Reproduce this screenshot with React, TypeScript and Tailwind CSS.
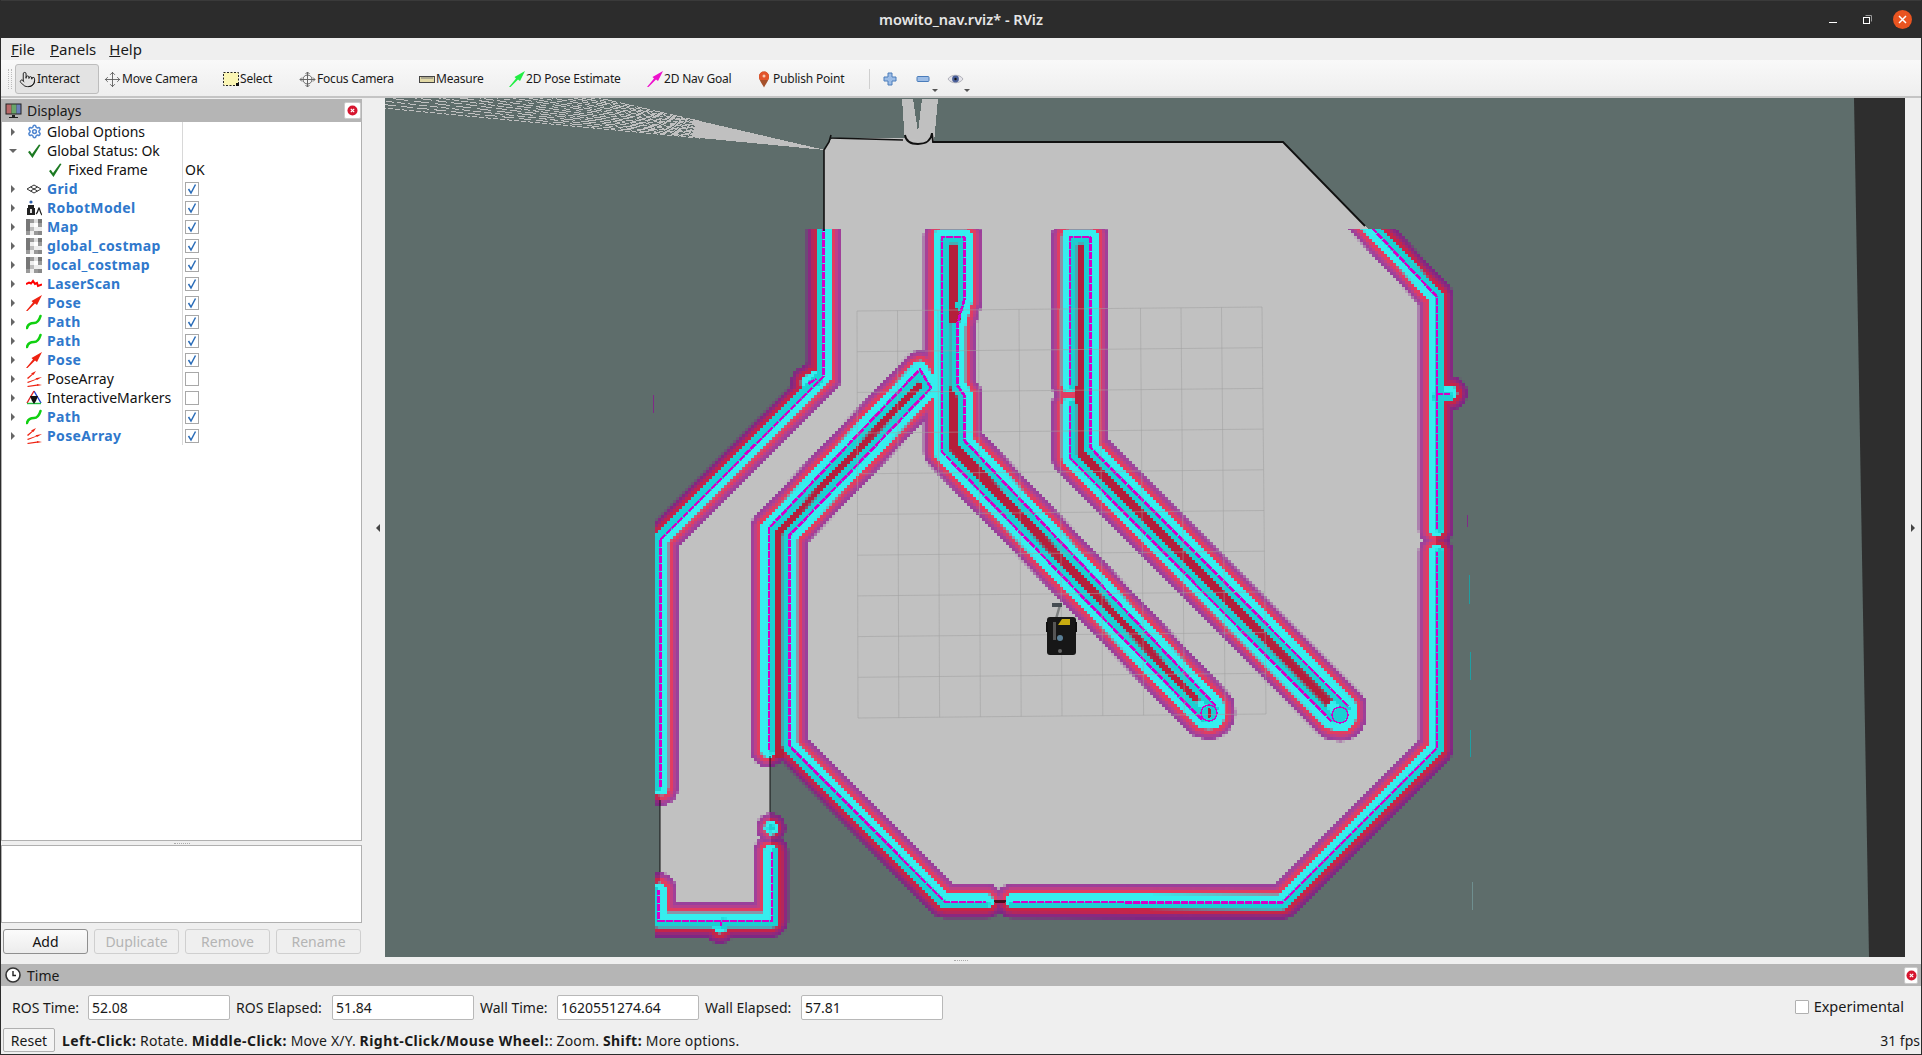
import { Pointer, Settings, Move } from "lucide-react";
import type { ReactNode } from "react";

type Pt = [number, number];

// shift a polyline sideways, used for the darker half of the cyan band
const shift = (pts: Pt[], d: number): Pt[] =>
  pts.map((p, i) => {
    const a = pts[Math.max(i - 1, 0)];
    const b = pts[Math.min(i + 1, pts.length - 1)];
    const n = (q: Pt, r: Pt): Pt => {
      const l = Math.hypot(r[0] - q[0], r[1] - q[1]) || 1;
      return [-(r[1] - q[1]) / l, (r[0] - q[0]) / l];
    };
    const n1 = i === 0 ? n(p, b) : n(a, p);
    const n2 = i === pts.length - 1 ? n(a, p) : n(p, b);
    const k = 1 + n1[0] * n2[0] + n1[1] * n2[1];
    return [p[0] + (d * (n1[0] + n2[0])) / k, p[1] + (d * (n1[1] + n2[1])) / k];
  });

const toD = (pts: Pt[]) => "M" + pts.map((p) => p[0] + " " + p[1]).join("L");
const ring = (x: number, y: number, r: number) =>
  `M${x - r} ${y}a${r} ${r} 0 1 0 ${2 * r} 0a${r} ${r} 0 1 0 ${-2 * r} 0`;

const contours: { pts: Pt[]; side: number }[] = [
  { pts: [[824, 200], [824, 377], [661, 540], [661, 788]], side: 1 },
  { pts: [[808, 383], [816, 378]], side: 1 },
  { pts: [[768, 750], [768, 528], [920, 368], [932, 388], [790, 536], [790, 745], [945, 901], [986, 901]], side: 1 },
  { pts: [[1013, 901], [1282, 902], [1436, 748], [1436, 552]], side: 1 },
  { pts: [[1436, 529], [1436, 297], [1340, 195]], side: 1 },
  { pts: [[1436, 393], [1450, 393]], side: 1 },
  { pts: [[1201, 720], [941, 452], [941, 236], [965, 236], [965, 300], [958, 325], [958, 385], [965, 395], [965, 440], [1217, 706]], side: 1 },
  { pts: [[1331, 722], [1069, 458], [1069, 405]], side: 1 },
  { pts: [[1069, 385], [1069, 236], [1091, 236], [1091, 447], [1349, 706]], side: 1 },
  { pts: [[771, 852], [771, 920], [659, 920], [659, 890]], side: -1 },
  { pts: [[720, 922], [720, 926]], side: -1 },
];

const allCores = contours.map((c) => toD(c.pts)).join("") + ring(1209, 713, 9) + ring(1340, 715, 9);
const darkHalf = contours.map((c) => toD(shift(c.pts, 3.7 * c.side))).join("");
const magenta = contours.map((c) => toD(shift(c.pts, 0.8 * c.side))).join("");

const layers = [
  { w: 35, c: "#8a0f8c" },
  { w: 31, c: "#9c1088" },
  { w: 27, c: "#be1070" },
  { w: 23, c: "#ee0a3c" },
];

// laser rays fanning out of the corner of the room
const rays = Array.from({ length: 18 }, (_, i) => {
  const s = 0.095 + (i * 0.135) / 17;
  return { d: `M700 ${150 - 125 * s}L385 ${150 - 440 * s}`, dash: `${5 + (i * 7) % 11} ${2 + (i * 3) % 5}` };
});

const CostMap = () => (
  <g clipPath="url(#bounds)" fill="none" strokeLinecap="round" strokeLinejoin="round">
    <g filter="url(#cells)">
      <g opacity={0.72}>
        {layers.map((l) => (
          <path key={l.w} d={allCores} stroke={l.c} strokeWidth={l.w} />
        ))}
        {[15, 13, 11, 9].map((r, i) => (
          <circle key={r} cx={771} cy={828} r={r} fill={layers[i].c} stroke="none" />
        ))}
      </g>
      <path
        d="M779 752L779 532L925 378M953 240L953 447L1209 713M1080 240L1080 452L1340 715"
        stroke="#b41f3b"
        strokeWidth={12}
      />
      <path d={allCores} stroke="#36eeee" strokeWidth={15} />
      <path d={darkHalf} stroke="#1ad0d2" strokeWidth={7.5} />
      <circle cx={771} cy={828} r={7} fill="#36eeee" stroke="none" />
      <circle cx={771} cy={828} r={3.5} fill="#1ad0d2" stroke="none" />
      <path d="M956 313L956 319" stroke="#b41f3b" strokeWidth={8} />
      <circle cx={1209} cy={713} r={8} fill="#1ad0d2" stroke="none" />
      <circle cx={1340} cy={715} r={8} fill="#1ad0d2" stroke="none" />
    </g>
    <g shapeRendering="crispEdges">
      <path d="M995 901L1005 901" stroke="#4a1020" strokeWidth={3} />
      <path d={magenta} stroke="#d400c8" strokeWidth={2.6} strokeLinecap="butt" strokeDasharray="7 1" />
      <path d={ring(1209, 713, 8) + ring(1340, 715, 8)} stroke="#d400c8" strokeWidth={1.5} />
      <path d="M1209 709L1209 717" stroke="#b41f3b" strokeWidth={3} />
    </g>
  </g>
);

const Robot = () => (
  <g>
    <path d="M1060 605L1054 626" stroke="#7d8080" strokeWidth={2.5} />
    <rect x={1052} y={603} width={10} height={4} fill="#454c52" />
    <rect x={1047} y={617} width={29} height={38} rx={3} fill="#171717" />
    <rect x={1046} y={622} width={2} height={10} fill="#101010" />
    <rect x={1075} y={622} width={2} height={10} fill="#101010" />
    <path d="M1058 625L1062 619L1070 619L1070 625Z" fill="#c8ac10" />
    <rect x={1053} y={622} width={3} height={18} fill="#555" />
    <circle cx={1060} cy={638} r={3} fill="#5a7f96" />
    <circle cx={1060} cy={651} r={2} fill="#666" />
  </g>
);

const Scene = () => {
  const cols = Array.from({ length: 11 }, (_, i) => i / 10);
  return (
    <svg viewBox="385 98 1520 859" width={1520} height={859} className="block">
      <defs>
        <clipPath id="bounds">
          <rect x={655} y={229} width={1250} height={728} />
        </clipPath>
        {/* the costmap is drawn in 3px cells, so sample it on a 3px lattice */}
        <filter
          id="cells"
          filterUnits="userSpaceOnUse"
          primitiveUnits="userSpaceOnUse"
          x={385}
          y={98}
          width={1520}
          height={859}
          colorInterpolationFilters="sRGB"
        >
          <feFlood x={386} y={99} width={1} height={1} floodColor="#000" />
          <feComposite x={385} y={98} width={3} height={3} />
          <feTile result="lattice" />
          <feComposite in="SourceGraphic" in2="lattice" operator="in" />
          <feMorphology operator="dilate" radius={1} />
        </filter>
      </defs>
      <rect x={385} y={98} width={1520} height={859} fill="#5e6d6b" />
      <polygon points="1854,98 1905,98 1905,957 1869,957" fill="#2e2e2e" />

      {/* laser fan and door gap */}
      <g stroke="#c0c0c0" fill="none" shapeRendering="crispEdges">
        {rays.map((r) => (
          <path key={r.d} d={r.d} strokeDasharray={r.dash} />
        ))}
      </g>
      <g fill="#c0c0c0" shapeRendering="crispEdges">
        <polygon points="825,150 700,121 700,138" />
        <polygon points="902,99 913,99 918,132 922,99 938,99 934,142 905,142" />
      </g>

      {/* free space */}
      <polygon
        points="824,150 832,138 905,138 934,142 1283,142 1365,226 1436,297 1436,748 1282,902 945,901 792,745 770,750 771,920 660,920 660,540 824,377"
        fill="#c1c1c1"
        shapeRendering="crispEdges"
      />

      <CostMap />

      {/* walls */}
      <g stroke="#111" fill="none" strokeWidth={1.6}>
        <path d="M824 150L824 231M824 150L829 142L831 135M831 138L903 140" />
        <path d="M905 135C906 142 912 144 918 144C926 144 931 141 932 133L933 142L1283 142L1365 226" strokeWidth={1.8} />
        <path d="M770 756L770 812M660 800L660 872" strokeWidth={1} />
      </g>
      <g stroke="#7f2a86" shapeRendering="crispEdges">
        <path d="M653 395L653 413M1467 515L1467 527" />
      </g>
      <g stroke="#1f9fa3" shapeRendering="crispEdges">
        <path d="M1469 575L1469 604M1470 652L1470 680M1470 730L1470 757" />
      </g>
      <path d="M1472 882L1472 910" stroke="#6f8f8f" shapeRendering="crispEdges" />

      {/* grid */}
      <g stroke="#a0a0a0" strokeOpacity={0.55} strokeWidth={1} fill="none">
        {cols.map((t) => (
          <path key={"v" + t} d={`M${857 + 405 * t} ${311 - 4 * t}L${858 + 408 * t} ${718 - 4 * t}`} />
        ))}
        {cols.map((t) => (
          <path key={"h" + t} d={`M${857 + t} ${311 + 407 * t}L${1262 + 4 * t} ${307 + 407 * t}`} />
        ))}
      </g>
      <Robot />
    </svg>
  );
};

/* ---------- small icons ---------- */

const Arrow = ({ color }: { color: string }) => (
  <svg width={16} height={16} viewBox="0 0 16 16">
    <path d="M0 16L7 7.5L5.5 6L16 0L11 10L9 8.5L1.5 16Z" fill={color} />
  </svg>
);

const Check = ({ size = 16 }: { size?: number }) => (
  <svg width={size} height={size} viewBox="0 0 16 16">
    <path d="M2 9L3.8 7.8L6 11L13 1.5L14.5 2L6.5 15Z" fill="#1c7a22" />
  </svg>
);

const MapIcon = () => {
  const cells = [
    "#777", "#999", "#ddd", "#777",
    "#777", "#eee", "#fff", "#999",
    "#777", "#bbb", "#eee", "#eee",
    "#999", "#eee", "#999", "#888",
  ];
  return (
    <div className="grid h-4 w-4 grid-cols-4">
      {cells.map((c, i) => (
        <svg key={i} width={4} height={4}>
          <rect width={4} height={4} fill={c} />
        </svg>
      ))}
    </div>
  );
};

const GridIcon = () => (
  <svg width={16} height={16} viewBox="0 0 16 16" fill="none" stroke="#333">
    <path d="M1 8L8 4L15 8L8 12ZM4.5 6L11.5 10M11.5 6L4.5 10" />
  </svg>
);

const RobotIcon = () => (
  <svg width={16} height={16} viewBox="0 0 16 16">
    <circle cx={5} cy={2} r={1.6} fill="#2c5fa8" />
    <path d="M2 5H8V8H9L9 15H1V8H2Z" fill="#222" />
    <path d="M4 9H6V13H4Z" fill="#ddd" />
    <path d="M10 14C12 13 12 9 13 8C14 9 14 13 16 15" stroke="#222" strokeWidth={1.3} fill="none" />
  </svg>
);

const LaserIcon = () => (
  <svg width={16} height={16} viewBox="0 0 16 16" fill="none">
    <path d="M0 8L3 6.5L5 7.5L7 5L9 8L11 7L12 10L16 8.5" stroke="#f00" strokeWidth={2} />
  </svg>
);

const PathIcon = () => (
  <svg width={16} height={16} viewBox="0 0 16 16" fill="none">
    <path d="M1 14C2 10 5 9 8 9C11 9 13 7 14.5 2" stroke="#10d010" strokeWidth={2.6} strokeLinecap="round" />
  </svg>
);

const PoseArrayIcon = () => (
  <svg width={16} height={16} viewBox="0 0 16 16" fill="#ee2211">
    <path d="M1 7L6 3L5 2.5L10 0L7.5 4L7 3.5L2 8Z" />
    <path d="M1 11L10 8L9.5 7.2L16 6L11 9L10.5 8.5L2 12Z" />
    <path d="M1 15L11 13.5L11 13L16 14L11 15L11 14.8L2 16Z" />
  </svg>
);

const MarkersIcon = () => (
  <svg width={16} height={16} viewBox="0 0 16 16" fill="none">
    <path d="M8 1L15 13" stroke="#1e3fd0" strokeWidth={1.4} />
    <path d="M8 1L1 13" stroke="#e02020" strokeWidth={1.4} />
    <path d="M1 13.5H15" stroke="#20c040" strokeWidth={1.4} />
    <path d="M4 6H12L10 11L8 14L6 11Z" fill="#111" />
  </svg>
);

const rowIcon: Record<string, ReactNode> = {
  gear: <Settings size={15} color="#4f86d0" strokeWidth={2.4} />,
  check: <Check />,
  grid: <GridIcon />,
  robot: <RobotIcon />,
  map: <MapIcon />,
  laser: <LaserIcon />,
  pose: <Arrow color="#ee2211" />,
  path: <PathIcon />,
  poses: <PoseArrayIcon />,
  markers: <MarkersIcon />,
};

const rows = [
  { label: "Global Options", icon: "gear" },
  { label: "Global Status: Ok", icon: "check", open: true },
  { label: "Fixed Frame", icon: "check", child: true, value: "OK" },
  { label: "Grid", icon: "grid", on: true },
  { label: "RobotModel", icon: "robot", on: true },
  { label: "Map", icon: "map", on: true },
  { label: "global_costmap", icon: "map", on: true },
  { label: "local_costmap", icon: "map", on: true },
  { label: "LaserScan", icon: "laser", on: true },
  { label: "Pose", icon: "pose", on: true },
  { label: "Path", icon: "path", on: true },
  { label: "Path", icon: "path", on: true },
  { label: "Pose", icon: "pose", on: true },
  { label: "PoseArray", icon: "poses", on: false },
  { label: "InteractiveMarkers", icon: "markers", on: false },
  { label: "Path", icon: "path", on: true },
  { label: "PoseArray", icon: "poses", on: true },
];

const Box = ({ on }: { on: boolean }) => (
  <div className="flex h-[14px] w-[14px] items-center justify-center border border-[#a8a8a8] bg-white">
    {on && (
      <svg width={12} height={12} viewBox="0 0 12 12" fill="none">
        <path d="M2.5 6L5 10L9.5 1.5" stroke="#2a6cb8" strokeWidth={1.5} />
      </svg>
    )}
  </div>
);

const TreeRow = ({ row }: { row: (typeof rows)[number] }) => (
  <div className="flex h-[19px] items-center">
    <div className="flex h-full w-[181px] shrink-0 items-center border-r border-[#d8d8d8]">
      {row.child ? (
        <div className="w-[45px]" />
      ) : (
        <div className="flex w-[24px] justify-center pr-[2px]">
          {row.open ? (
            <div className="h-0 w-0 border-x-[4px] border-t-[4px] border-x-transparent border-t-[#666]" />
          ) : (
            <div className="h-0 w-0 border-y-[4px] border-l-[4px] border-y-transparent border-l-[#666]" />
          )}
        </div>
      )}
      <div className="flex h-4 w-4 items-center justify-center">{rowIcon[row.icon]}</div>
      <span className={row.on ? "ml-[5px] font-bold tracking-[0.35px] text-[#2f78cc]" : "ml-[5px] text-[#111]"}>{row.label}</span>
    </div>
    <div className="pl-[2px]">
      {row.value ? <span className="text-[#111]">{row.value}</span> : row.on !== undefined && <Box on={row.on} />}
    </div>
  </div>
);

const CloseBtn = ({ narrow }: { narrow?: boolean }) => (
  <div
    className={
      narrow
        ? "flex h-[17px] w-[14px] items-center justify-center rounded-[2px] border border-[#ccc] bg-white"
        : "flex h-[17px] w-[17px] items-center justify-center rounded-[2px] border border-[#ccc] bg-white"
    }
  >
    <svg width={11} height={11} viewBox="0 0 11 11">
      <circle cx={5.5} cy={5.5} r={5} fill="#d6142e" />
      <path d="M3.8 3.8L7.2 7.2M7.2 3.8L3.8 7.2" stroke="#fff" strokeWidth={1.2} />
    </svg>
  </div>
);

const DockButton = ({ label, active }: { label: string; active?: boolean }) => (
  <div
    className={
      active
        ? "flex h-[25px] w-[85px] items-center justify-center rounded-[3px] border border-[#8f8f8f] bg-gradient-to-b from-[#fbfbfb] to-[#ececec] text-[#111]"
        : "flex h-[25px] w-[85px] items-center justify-center rounded-[3px] border border-[#cfcfcf] bg-[#efefef] text-[#b4b4b4]"
    }
  >
    {label}
  </div>
);

const tools: { label: string; w: string; icon: ReactNode; active?: boolean }[] = [
  { label: "Interact", w: "w-[84px]", icon: <Pointer size={17} strokeWidth={1.3} color="#111" />, active: true },
  { label: "Move Camera", w: "w-[118px]", icon: <Move size={17} strokeWidth={1.2} color="#555" /> },
  {
    label: "Select",
    w: "w-[77px]",
    icon: (
      <svg width={16} height={14} viewBox="0 0 16 14">
        <rect x={0.5} y={0.5} width={15} height={13} fill="#fbf6b4" stroke="#222" strokeDasharray="2 1.5" />
        <rect x={13} y={11} width={3} height={3} fill="#111" />
      </svg>
    ),
  },
  {
    label: "Focus Camera",
    w: "w-[119px]",
    icon: (
      <svg width={17} height={17} viewBox="0 0 17 17" fill="none" stroke="#666">
        <circle cx={8.5} cy={8.5} r={4.5} />
        <path d="M8.5 1V16M1 8.5H16M6.5 3L8.5 1L10.5 3M6.5 14L8.5 16L10.5 14M3 6.5L1 8.5L3 10.5M14 6.5L16 8.5L14 10.5" />
      </svg>
    ),
  },
  {
    label: "Measure",
    w: "w-[90px]",
    icon: (
      <svg width={16} height={7} viewBox="0 0 16 7">
        <rect x={0.5} y={0.5} width={15} height={6} fill="#e2d9a6" stroke="#444" />
        <path d="M3 1V3M5 1V3M7 1V3M9 1V3M11 1V3M13 1V3" stroke="#777" />
      </svg>
    ),
  },
  { label: "2D Pose Estimate", w: "w-[138px]", icon: <Arrow color="#22ee44" /> },
  { label: "2D Nav Goal", w: "w-[109px]", icon: <Arrow color="#ee11cc" /> },
  {
    label: "Publish Point",
    w: "w-[117px]",
    icon: (
      <svg width={16} height={17} viewBox="0 0 16 17">
        <path d="M8 16.5C5 11 3 9 3 5.5A5 5 0 0 1 13 5.5C13 9 11 11 8 16.5Z" fill="#a5502a" />
        <path d="M3 5.5A5 5 0 0 1 13 5.5C13 7 12.5 8 12 9H4C3.5 8 3 7 3 5.5Z" fill="#e2542c" />
        <circle cx={8} cy={5} r={1.5} fill="#f6c8b0" />
      </svg>
    ),
  },
];

const ToolBar = () => (
  <div className="flex h-[38px] items-center border-b-2 border-[#c4c4c4] bg-gradient-to-b from-[#f9f9f9] to-[#eeeeee] pl-[7px] pt-[2px] text-[12px] tracking-[-0.2px] text-[#1a1a1a]">
    <div className="mr-[3px] h-[20px] w-[4px] border-x border-dotted border-[#bbb]" />
    {tools.map((t) => (
      <div
        key={t.label}
        className={
          (t.active
            ? "h-[30px] rounded-[3px] border border-[#bdbdbd] bg-[#e3e3e3] mr-[2px] "
            : "h-[30px] ") +
          "flex shrink-0 items-center pl-[3px] " +
          t.w
        }
      >
        <div className="flex w-[17px] shrink-0 items-center justify-center">{t.icon}</div>
        <span className="ml-[1px] whitespace-nowrap">{t.label}</span>
      </div>
    ))}
    <div className="h-[20px] w-px bg-[#cfcfcf]" />
    <div className="ml-[12px] flex items-center gap-[17px]">
      <svg width={16} height={16} viewBox="0 0 16 16">
        <path d="M6 2H10V6H14V10H10V14H6V10H2V6H6Z" fill="#9dbde6" stroke="#4a7cba" />
      </svg>
      <div className="flex items-end">
        <svg width={16} height={16} viewBox="0 0 16 16">
          <rect x={2} y={5.5} width={12} height={5} rx={1} fill="#9dbde6" stroke="#4a7cba" />
        </svg>
        <div className="ml-[1px] mb-[-5px] h-0 w-0 border-x-[3px] border-t-[3px] border-x-transparent border-t-[#555]" />
      </div>
      <div className="-ml-[8px] flex items-end">
        <svg width={17} height={16} viewBox="0 0 17 16">
          <path d="M1 8C4 3 13 3 16 8C13 13 4 13 1 8Z" fill="#e4e4ea" stroke="#b0b0b8" />
          <circle cx={8.5} cy={8} r={3.4} fill="#4a5f98" />
          <circle cx={8.5} cy={8} r={1.2} fill="#111" />
        </svg>
        <div className="mb-[-5px] h-0 w-0 border-x-[3px] border-t-[3px] border-x-transparent border-t-[#555]" />
      </div>
    </div>
  </div>
);

const TitleBar = () => (
  <div className="grid h-[38px] grid-cols-[1fr_auto_1fr] items-center border-t border-[#3a3a3a] bg-[#2c2c2c]">
    <div />
    <span className="text-[14.5px] font-semibold text-[#e6e6e6]">mowito_nav.rviz* - RViz</span>
    <div className="flex items-center justify-end pr-[9px]">
      <div className="h-px w-[8px] translate-y-[3px] bg-white" />
      <svg width={9} height={9} viewBox="0 0 9 9" className="ml-[26px]" fill="none">
        <path d="M2.5 .5H8.5V6.5" stroke="#999" />
        <rect x={.5} y={2.5} width={6} height={6} stroke="#fff" />
      </svg>
      <svg width={19} height={19} viewBox="0 0 19 19" className="ml-[21px]">
        <circle cx={9.5} cy={9.5} r={9.5} fill="#e95420" />
        <path d="M6 6L13 13M13 6L6 13" stroke="#fff" strokeWidth={1.5} />
      </svg>
    </div>
  </div>
);

const MenuBar = () => (
  <div className="flex h-[22px] items-center gap-[15px] bg-[#efefef] pl-[10px] text-[15px] text-[#1a1a1a]">
    <span><span className="underline">F</span>ile</span>
    <span className="-mr-[2px]"><span className="underline">P</span>anels</span>
    <span><span className="underline">H</span>elp</span>
  </div>
);

const Displays = () => (
  <div className="flex w-[361px] shrink-0 flex-col pt-px text-[14px]">
    <div className="flex h-[23px] items-center justify-between bg-[#b5b5b5] pl-[4px] pr-[1px]">
      <div className="flex items-center gap-[5px] text-[#1a1a1a]">
        <svg width={17} height={16} viewBox="0 0 17 16">
          <rect x={.5} y={.5} width={16} height={11} fill="#222" />
          <rect x={1.5} y={1.5} width={5} height={9} fill="#b96a6a" />
          <rect x={6.5} y={1.5} width={5} height={9} fill="#6aa56a" />
          <rect x={11.5} y={1.5} width={4} height={9} fill="#6a7fb9" />
          <path d="M7 12H10V14H13V15H4V14H7Z" fill="#222" />
        </svg>
        <span>Displays</span>
      </div>
      <CloseBtn />
    </div>
    <div className="h-[719px] border border-t-0 border-[#b0b0b0] bg-white">
      {rows.map((r, i) => (
        <TreeRow key={i} row={r} />
      ))}
    </div>
    <div className="flex h-[4px] items-center justify-center">
      <div className="w-[16px] border-t border-dotted border-[#aaa]" />
    </div>
    <div className="h-[78px] border border-[#b0b0b0] bg-white" />
    <div className="flex justify-between px-[2px] pr-[1px] pt-[6px]">
      <DockButton label="Add" active />
      <DockButton label="Duplicate" />
      <DockButton label="Remove" />
      <DockButton label="Rename" />
    </div>
  </div>
);

const Field = ({ label, value, w }: { label: string; value: string; w: string }) => (
  <div className="flex items-center">
    <span className={"whitespace-nowrap " + w}>{label}</span>
    <div className="flex h-[25px] w-[142px] items-center rounded-[2px] border border-[#b8b8b8] bg-white pl-[3px]">{value}</div>
  </div>
);

const TimePanel = () => (
  <div className="flex flex-col text-[14px] text-[#1a1a1a]">
    <div className="flex h-[22px] items-center justify-between bg-[#b5b5b5] pl-[4px] pr-[3px]">
      <div className="flex items-center gap-[6px]">
        <svg width={16} height={16} viewBox="0 0 16 16" fill="none">
          <circle cx={8} cy={8} r={7} fill="#fff" stroke="#333" strokeWidth={1.6} />
          <path d="M8 4V8.5H11" stroke="#222" strokeWidth={1.4} />
        </svg>
        <span>Time</span>
      </div>
      <CloseBtn narrow />
    </div>
    <div className="flex h-[42px] items-center justify-between pl-[11px] pr-[17px]">
      <div className="flex items-center gap-[6px]">
        <Field label="ROS Time:" value="52.08" w="w-[76px]" />
        <Field label="ROS Elapsed:" value="51.84" w="w-[96px]" />
        <Field label="Wall Time:" value="1620551274.64" w="w-[77px]" />
        <Field label="Wall Elapsed:" value="57.81" w="w-[96px]" />
      </div>
      <div className="flex items-center gap-[5px] text-[14.5px]">
        <div className="h-[14px] w-[14px] rounded-[1px] border border-[#b0b0b0] bg-white" />
        <span>Experimental</span>
      </div>
    </div>
    <div className="flex h-[24px] items-center justify-between pl-[2px] pr-[1px]">
      <div className="flex items-center gap-[7px]">
        <div className="flex h-[24px] w-[52px] items-center justify-center rounded-[2px] border border-[#b0b0b0] bg-[#f4f4f4]">Reset</div>
        <span className="whitespace-nowrap tracking-[0.15px]">
          <b className="font-bold tracking-[0.45px]">Left-Click:</b> Rotate. <b className="font-bold tracking-[0.45px]">Middle-Click:</b> Move X/Y.{" "}
          <b className="font-bold tracking-[0.45px]">Right-Click/Mouse Wheel:</b>: Zoom. <b className="font-bold tracking-[0.45px]">Shift:</b> More options.
        </span>
      </div>
      <span>31 fps</span>
    </div>
  </div>
);

export default function App() {
  return (
    <div className="flex h-[1055px] w-[1922px] flex-col overflow-hidden border-x border-b border-[#2c2c2c] bg-[#efefef] font-['Noto_Sans',sans-serif]">
      <TitleBar />
      <MenuBar />
      <ToolBar />
      <div className="flex h-[859px] shrink-0">
        <Displays />
        <div className="flex w-[23px] shrink-0 items-center justify-end pr-[5px]">
          <div className="h-0 w-0 border-y-[4px] border-r-[4px] border-y-transparent border-r-[#444]" />
        </div>
        <Scene />
        <div className="flex flex-1 items-center justify-center">
          <div className="h-0 w-0 border-y-[4px] border-l-[4px] border-y-transparent border-l-[#444]" />
        </div>
      </div>
      <div className="flex h-[7px] shrink-0 items-center justify-center">
        <div className="w-[14px] border-t border-dotted border-[#aaa]" />
      </div>
      <TimePanel />
    </div>
  );
}
